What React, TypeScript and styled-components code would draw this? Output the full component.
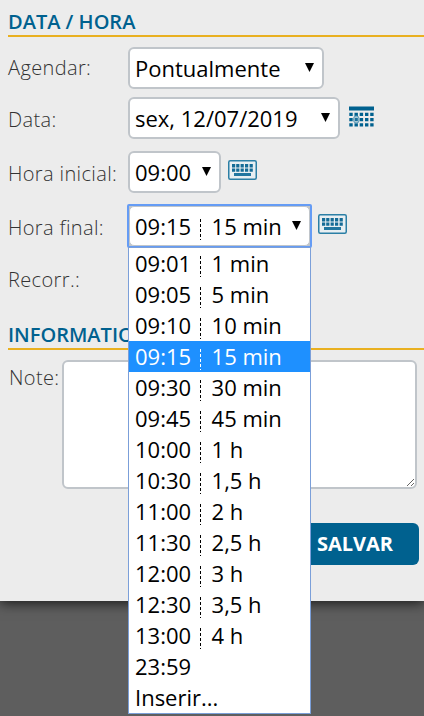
import React from "react";
import styled, { createGlobalStyle } from "styled-components";

const Global = createGlobalStyle`
  * { box-sizing: border-box; }
  html, body { margin: 0; height: 716px; overflow: hidden; background: #5e5e5e; }
  body { font-family: "Open Sans", sans-serif; color: #333; }
`;

const Panel = styled.main`
  height: 601px;
  padding: 8px 0 0 8px;
  background: #ececec;
  box-shadow: 0 2px 12px rgba(0, 0, 0, 0.75);
`;

const Heading = styled.h2<{ $top?: number }>`
  margin: ${(p) => p.$top ?? 0}px 0 0;
  height: 29px;
  border-bottom: 2px solid #e9b020;
  color: #00618f;
  font-size: 20px;
  line-height: 27px;
  font-weight: 600;
`;

const Fields = styled.div`
  display: grid;
  grid-template-rows: 42px 42px 42px 42px 42px;
  row-gap: 12px;
  padding-top: 10px;
`;

const Row = styled.div<{ $shift?: number }>`
  display: flex;
  align-items: center;
  height: 42px;
  margin-top: ${(p) => p.$shift ?? 0}px;
`;

const Label = styled.label<{ $drop?: number }>`
  width: 120px;
  flex: none;
  padding-top: ${(p) => p.$drop ?? 0}px;
  font-size: 20px;
  font-weight: 300;
  line-height: 28px;
  letter-spacing: 0.37px;
  white-space: nowrap;
`;

const SelectBox = styled.div<{ $width: number; $open?: boolean }>`
  position: relative;
  display: flex;
  align-items: center;
  justify-content: space-between;
  width: ${(p) => p.$width}px;
  height: 42px;
  padding: 0 8px 0 5px;
  border: 2px solid #c0c5ca;
  border-radius: 6px;
  background: #fff;
  color: #000;
  font-size: 22px;
  line-height: 30px;
  white-space: pre;
`;

const FocusFrame = styled.div`
  width: 185px;
  height: 44px;
  margin: 0 -1px;
  border: 2px solid #659cf5;
  border-radius: 2px;
  background: #c0c5ca;

  > ${SelectBox} {
    width: 181px;
    height: 40px;
    padding: 0 8px 0 5px;
    border-width: 1px;
    border-radius: 5px;
  }
`;

const Arrow = styled.svg`
  width: 9px;
  height: 9px;
  margin-top: -2px;
  flex: none;
`;

const IconSlot = styled.span<{ $left: number; $lift: number }>`
  display: flex;
  margin: -${(p) => p.$lift}px 0 0 ${(p) => p.$left}px;
`;

const Menu = styled.ul`
  position: absolute;
  z-index: 2;
  top: 40px;
  left: -2px;
  width: 183px;
  margin: 0;
  padding: 0;
  list-style: none;
  border: 1px solid #7b9fd9;
  background: #fff;
`;

const Option = styled.li<{ $selected?: boolean }>`
  height: 31px;
  padding-left: 6px;
  line-height: 30px;
  background: ${(p) => (p.$selected ? "#1e90ff" : "#fff")};
  color: ${(p) => (p.$selected ? "#fff" : "#000")};
`;

const Divider = styled.span`
  display: inline-block;
  width: 9px;
  height: 21px;
  margin-bottom: -5px;
  background: repeating-linear-gradient(currentColor 0 3px, transparent 3px 5px) 3px 0 / 1.4px 21px no-repeat;
`;

const NoteRow = styled.div`
  display: flex;
  align-items: flex-start;
  padding-top: 10px;
`;

const NoteLabel = styled(Label)`
  width: 54px;
  padding: 4px 0 0 1px;
`;

const NoteArea = styled.textarea`
  width: 355px;
  height: 129px;
  margin: 0;
  border: 2px solid #c0c5ca;
  border-radius: 6px;
  background: #fff;
  font: 22px "Open Sans", sans-serif;
`;

const Actions = styled.div`
  display: flex;
  justify-content: flex-end;
  padding: 34px 5px 0 0;
`;

const SaveButton = styled.button`
  width: 128px;
  height: 42px;
  padding: 0;
  border: 0;
  border-radius: 6px;
  background: #00618f;
  color: #fff;
  font: 700 20px/42px "Open Sans", sans-serif;
`;

const Caret = () => (
  <Arrow viewBox="0 0 9 9">
    <path d="M0 0h9L4.5 9z" fill="#000" />
  </Arrow>
);

const Keyboard = () => (
  <svg width="29" height="20" viewBox="0 0 29 20">
    <rect x="0.75" y="0.75" width="27.5" height="18.5" rx="1.5" fill="#e8eff2" stroke="#2b7fa5" strokeWidth="1.5" />
    {[4, 8.2, 12.6, 17, 21.6].map((x) => (
      <path key={x} d={`M${x} 4h3.2v3.4h-3.2zM${x} 8.6h3.2v3.2h-3.2z`} fill="#146b96" />
    ))}
    <path d="M6 13h17v3H6z" fill="#2176a0" />
  </svg>
);

const Calendar = () => (
  <svg width="25" height="21" viewBox="0 0 25 21">
    <path d="M0 0.5h25v4H0z" fill="#00618f" />
    {[0.3, 5.5, 10.7, 16, 21.2].map((x) => (
      <path key={x} d={`M${x} 6.8h3.4v3.2h-3.4zM${x} 12h3.4v3.2h-3.4zM${x} 17.2h3.4v3.2h-3.4z`} fill="#00618f" />
    ))}
    <rect x="4.6" y="10" width="5.4" height="7" rx="2.5" fill="#a9c8d6" stroke="#5b9ab8" />
    <path d="M5.8 12h3v3h-3z" fill="#1c719b" />
  </svg>
);

const Entry = ({ time, span }: { time: string; span?: string }) => (
  <span>
    {time}
    {span && (
      <>
        {" "}
        <Divider />
        {" "}
        {span}
      </>
    )}
  </span>
);

const options: { time: string; span?: string }[] = [
  { time: "09:01", span: "1 min" },
  { time: "09:05", span: "5 min" },
  { time: "09:10", span: "10 min" },
  { time: "09:15", span: "15 min" },
  { time: "09:30", span: "30 min" },
  { time: "09:45", span: "45 min" },
  { time: "10:00", span: "1 h" },
  { time: "10:30", span: "1,5 h" },
  { time: "11:00", span: "2 h" },
  { time: "11:30", span: "2,5 h" },
  { time: "12:00", span: "3 h" },
  { time: "12:30", span: "3,5 h" },
  { time: "13:00", span: "4 h" },
  { time: "23:59" },
  { time: "Inserir..." },
];

export default function App() {
  return (
    <>
      <Global />
      <Panel>
        <Heading>DATA / HORA</Heading>
        <Fields>
          <Row>
            <Label>Agendar:</Label>
            <SelectBox $width={196}>Pontualmente<Caret /></SelectBox>
          </Row>
          <Row $shift={-4}>
            <Label $drop={3}>Data:</Label>
            <SelectBox $width={212}>sex, 12/07/2019<Caret /></SelectBox>
            <IconSlot $left={9} $lift={3}><Calendar /></IconSlot>
          </Row>
          <Row $shift={-4}>
            <Label $drop={3}>Hora inicial:</Label>
            <SelectBox $width={93}>09:00<Caret /></SelectBox>
            <IconSlot $left={7} $lift={4}><Keyboard /></IconSlot>
          </Row>
          <Row $shift={-4}>
            <Label $drop={3}>Hora final:</Label>
            <FocusFrame>
              <SelectBox $width={181} $open>
                <Entry time="09:15" span="15 min" />
                <Caret />
                <Menu>
                  {options.map((o) => (
                    <Option key={o.time} $selected={o.time === "09:15"}>
                      <Entry {...o} />
                    </Option>
                  ))}
                </Menu>
              </SelectBox>
            </FocusFrame>
            <IconSlot $left={7} $lift={4}><Keyboard /></IconSlot>
          </Row>
          <Row $shift={-6}>
            <Label $drop={3}>Recorr.:</Label>
          </Row>
        </Fields>
        <Heading $top={16}>INFORMATIONS</Heading>
        <NoteRow>
          <NoteLabel>Note:</NoteLabel>
          <NoteArea />
        </NoteRow>
        <Actions>
          <SaveButton>SALVAR</SaveButton>
        </Actions>
      </Panel>
    </>
  );
}
